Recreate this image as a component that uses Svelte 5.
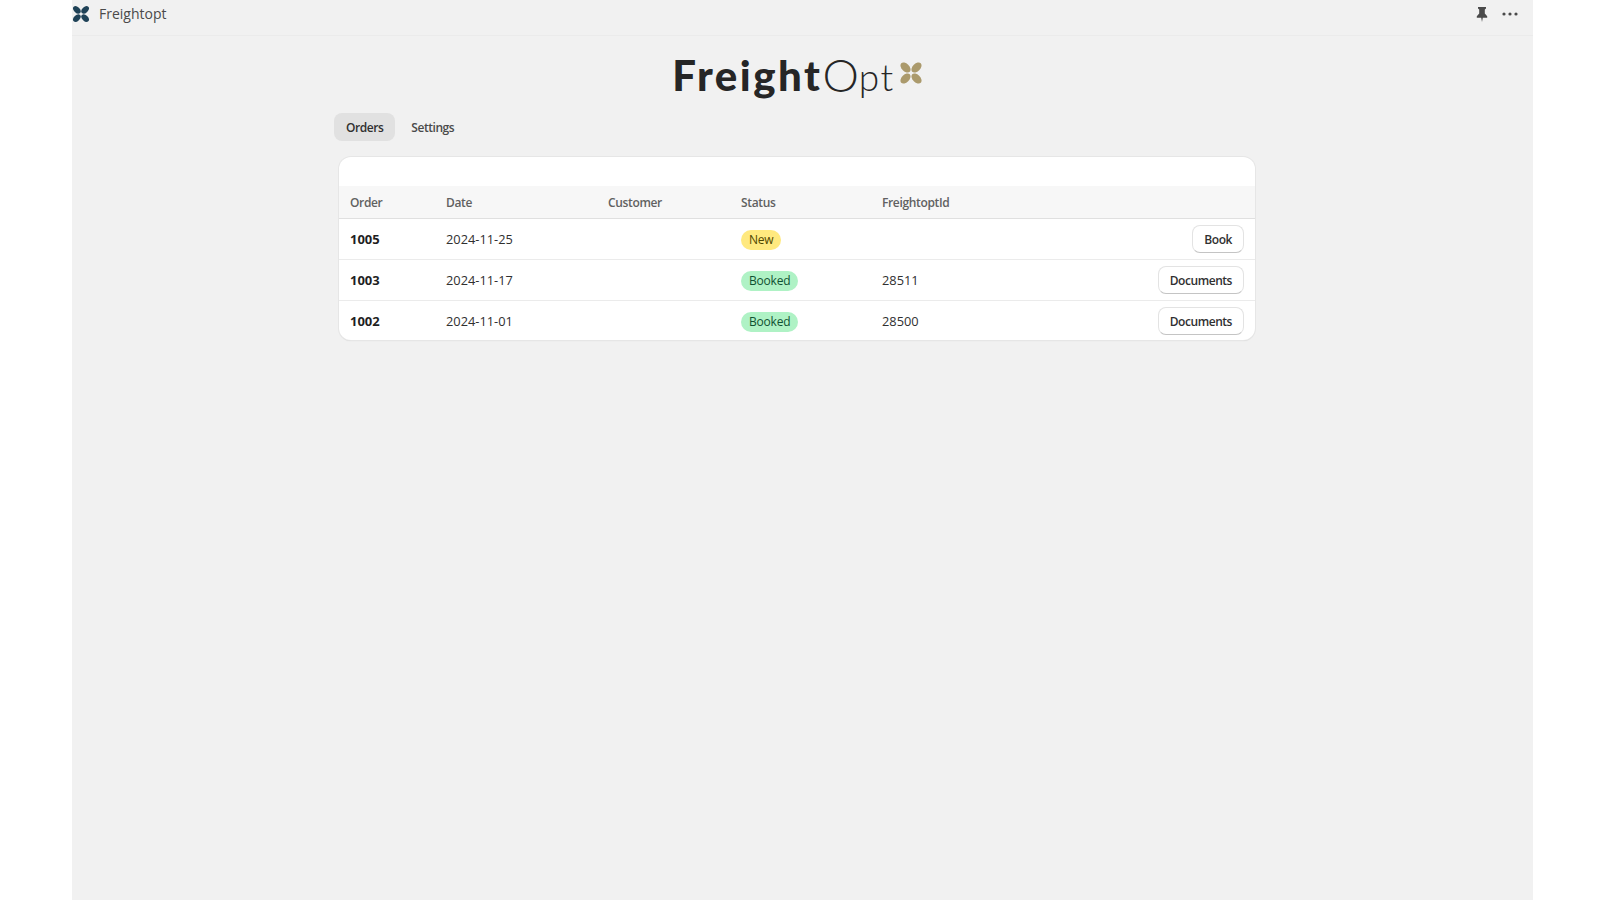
<script>
  const orders = [
    { id: '1005', date: '2024-11-25', status: 'New', freightoptId: '', action: 'Book' },
    { id: '1003', date: '2024-11-17', status: 'Booked', freightoptId: '28511', action: 'Documents' },
    { id: '1002', date: '2024-11-01', status: 'Booked', freightoptId: '28500', action: 'Documents' }
  ];
</script>

{#snippet mark(color)}
  <svg viewBox="0 0 24 24" aria-hidden="true">
    <g fill={color}>
      <ellipse cx="6.5" cy="6.5" rx="6" ry="3.800" transform="rotate(45 6.5 6.5)" />
      <ellipse cx="17.500" cy="6.5" rx="6" ry="3.800" transform="rotate(-45 17.500 6.5)" />
      <ellipse cx="6.5" cy="17.500" rx="6" ry="3.800" transform="rotate(-45 6.5 17.500)" />
      <ellipse cx="17.500" cy="17.500" rx="6" ry="3.800" transform="rotate(45 17.500 17.500)" />
    </g>
  </svg>
{/snippet}

<div class="shell">
  <header class="topbar">
    <div class="app-name">
      <span class="app-icon">{@render mark('#1f4257')}</span>
      <span>Freightopt</span>
    </div>
    <div class="top-actions">
      <svg class="pin" viewBox="0 0 16 16" aria-hidden="true">
        <path d="M4 1h8v1.600L10.800 3.600v4l2.400 2.600v1.500H8.800L8 16l-.8-4.300H2.800v-1.500l2.400-2.600v-4L4 2.600z" fill="#4a4a4a" />
      </svg>
      <svg class="more" viewBox="0 0 16 4" aria-hidden="true">
        <circle cx="2" cy="2" r="1.600" fill="#4a4a4a" />
        <circle cx="8" cy="2" r="1.600" fill="#4a4a4a" />
        <circle cx="14" cy="2" r="1.600" fill="#4a4a4a" />
      </svg>
    </div>
  </header>

  <main class="content">
    <div class="brand">
      <span class="brand-bold">Freight</span><span class="brand-o">O</span><span class="brand-thin">pt</span>
      <span class="brand-mark">{@render mark('#ab9a6c')}</span>
    </div>

    <nav class="tabs">
      <span class="tab active">Orders</span>
      <span class="tab">Settings</span>
    </nav>

    <section class="card">
      <div class="card-top"></div>
      <div class="row head">
        <span>Order</span>
        <span>Date</span>
        <span>Customer</span>
        <span>Status</span>
        <span>FreightoptId</span>
      </div>
      {#each orders as order}
        <div class="row">
          <span class="order-id">{order.id}</span>
          <span class="cell-text">{order.date}</span>
          <span></span>
          <span class="status"><span class="badge" class:new={order.status === 'New'}>{order.status}</span></span>
          <span class="cell-text">{order.freightoptId}</span>
          <span class="action"><button>{order.action}</button></span>
        </div>
      {/each}
    </section>
  </main>
</div>

<style>
  :global(body) {
    background: #fff;
    font-family: "Open Sans", "Noto Sans", sans-serif;
  }

  .shell {
    width: 1461px;
    height: 900px;
    margin-left: 72px;
    background: #f1f1f1;
    overflow: hidden;
  }

  .topbar {
    height: 36px;
    box-sizing: border-box;
    border-bottom: 1px solid #ebebeb;
    display: flex;
    justify-content: space-between;
    align-items: center;
    padding: 0 15px 8px 0;
  }

  .app-name {
    display: flex;
    align-items: center;
    gap: 9px;
    font-size: 14px;
    color: #4a4a4a;
  }

  .app-icon {
    width: 18px;
    height: 18px;
    display: block;
  }

  .app-icon svg,
  .brand-mark svg {
    display: block;
    width: 100%;
    height: 100%;
  }

  .top-actions {
    display: flex;
    align-items: center;
    gap: 12px;
  }

  .pin {
    width: 16px;
    height: 16px;
  }

  .more {
    width: 16px;
    height: 4px;
  }

  .content {
    width: 925px;
    margin-left: 262px;
  }

  .brand {
    height: 77px;
    display: flex;
    align-items: center;
    justify-content: center;
    font-family: Lato, sans-serif;
    color: #262626;
    padding-left: 2px;
  }

  .brand-bold {
    font-size: 42px;
    font-weight: 900;
    letter-spacing: 2.500px;
  }

  .brand-o {
    font-size: 46px;
    font-weight: 300;
  }

  .brand-thin {
    font-size: 37px;
    font-weight: 300;
    letter-spacing: 1.500px;
    margin-top: 4px;
  }

  .brand-mark {
    width: 24px;
    height: 24px;
    margin-left: 4px;
    margin-top: -3px;
  }

  .tabs {
    display: flex;
    gap: 4px;
    height: 28px;
    margin-bottom: 16px;
  }

  .tab {
    height: 28px;
    font-size: 12px;
    font-weight: 600;
    letter-spacing: -0.450px;
    color: #4a4a4a;
    padding: 0 12px;
    line-height: 30px;
    border-radius: 8px;
  }

  .tab.active {
    background: #e1e1e1;
    color: #303030;
  }

  .card {
    width: 916px;
    margin-left: 5px;
    background: #fff;
    border-radius: 12px;
    box-shadow: 0 0 0 1px #e6e6e6, 0 1px 1px #cfcfcf;
    overflow: hidden;
    font-size: 12px;
    color: #303030;
  }

  .card-top {
    height: 29px;
  }

  .row {
    display: grid;
    grid-template-columns: 96px 162px 133px 141px 1fr auto;
    align-items: center;
    height: 41px;
    box-sizing: border-box;
    padding: 0 11px;
    border-top: 1px solid #ebebeb;
  }

  .row:last-child {
    height: 40px;
  }

  .row:last-child .action {
    padding-top: 1px;
  }

  .row:last-child .status {
    padding-top: 2px;
  }

  .head {
    height: 32px;
    background: #f7f7f7;
    border-top: 0;
    color: #616161;
    font-weight: 600;
    letter-spacing: -0.350px;
  }

  .head + .row {
    border-top-color: #e0e0e0;
  }

  .cell-text {
    font-size: 12.800px;
  }

  .order-id {
    font-weight: 700;
    color: #1f1f1f;
    font-size: 13px;
  }

  .status {
    display: flex;
    padding-top: 1px;
  }

  .badge {
    line-height: 20px;
    padding: 0 8px;
    border-radius: 10px;
    background: #aff2c5;
    color: #0f5132;
    letter-spacing: -0.200px;
  }

  .badge.new {
    background: #ffe97f;
    color: #4f4700;
  }

  .action {
    display: flex;
    justify-content: flex-end;
  }

  button {
    height: 28px;
    padding: 0 11px;
    font: 600 12px "Open Sans", "Noto Sans", sans-serif;
    letter-spacing: -0.450px;
    color: #303030;
    background: #fff;
    border: 1px solid #e3e3e3;
    border-bottom-color: #c4c4c4;
    border-radius: 8px;
  }
</style>
